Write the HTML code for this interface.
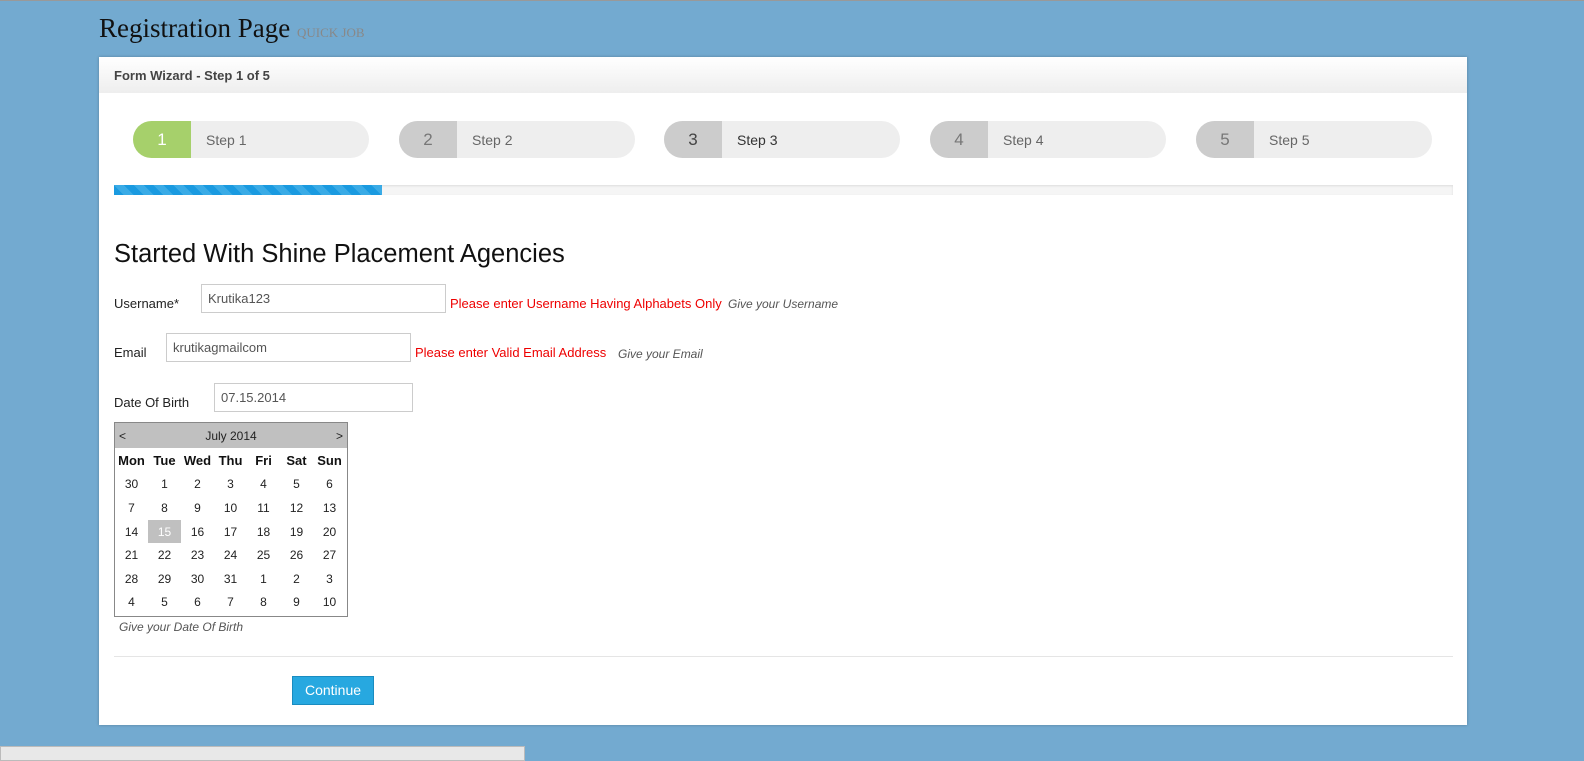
<!DOCTYPE html>
<html><head><style>
*{margin:0;padding:0;box-sizing:border-box}
body{width:1584px;height:760px;background:#73aad0;font-family:"Liberation Sans",Arial,sans-serif;position:relative;overflow:hidden;border-top:1px solid #999}
.a{position:absolute}
.pill{position:absolute;top:120px;width:236px;height:37px;border-radius:19px;background:#eee;overflow:hidden;font-size:14px;color:#666}
.pill .n{position:absolute;left:0;top:0;width:58px;height:37px;background:#ccc;color:#777;font-size:17px;text-align:center;line-height:37px}
.pill .t{position:absolute;left:73px;top:0;line-height:39px}
input{position:absolute;height:29px;border:1px solid #ccc;font:13px "Liberation Sans",Arial,sans-serif;color:#555;padding-left:6px;background:#fff}
.lab{position:absolute;font-size:13px;color:#222}
.err{position:absolute;font-size:13px;color:#e00}
.hint{position:absolute;font-size:12px;color:#555;font-style:italic}
table{border-collapse:collapse;font-size:12px}
td,th{width:33px;height:23.6px;text-align:center;color:#222}
th{font-size:13px;color:#111}
</style></head><body>
<div class="a" style="left:99px;top:12px;font:27px 'Liberation Serif',serif;color:#111">Registration Page <span style="font-size:13px;color:#888">QUICK JOB</span></div>
<div class="a" style="left:99px;top:56px;width:1368px;height:668px;background:#fff;box-shadow:0 0 3px rgba(0,0,0,.25)"></div>
<div class="a" style="left:99px;top:56px;width:1368px;height:36px;background:linear-gradient(#fff,#eee);font-size:13px;font-weight:bold;color:#444;padding:11px 0 0 15px">Form Wizard - Step 1 of 5</div>
<div class="pill" style="left:133px"><div class="n" style="background:#a6d06b;color:#fff">1</div><div class="t">Step 1</div></div>
<div class="pill" style="left:399px"><div class="n">2</div><div class="t">Step 2</div></div>
<div class="pill" style="left:664px"><div class="n" style="color:#444">3</div><div class="t" style="color:#333">Step 3</div></div>
<div class="pill" style="left:930px"><div class="n">4</div><div class="t">Step 4</div></div>
<div class="pill" style="left:1196px"><div class="n">5</div><div class="t">Step 5</div></div>
<div class="a" style="left:114px;top:184px;width:1339px;height:10px;background:#f5f5f5;box-shadow:inset 0 1px 2px rgba(0,0,0,.1)"></div>
<div class="a" style="left:114px;top:184px;width:268px;height:10px;background:repeating-linear-gradient(45deg,#1a9ae0 0 7px,#3aabe6 7px 14px)"></div>
<div class="a" style="left:114px;top:239px;font-size:25.5px;color:#111">Started With Shine Placement Agencies</div>
<div class="lab" style="left:114px;top:295px">Username*</div>
<input style="left:201px;top:283px;width:245px" value="Krutika123">
<div class="err" style="left:450px;top:295px">Please enter Username Having Alphabets Only</div>
<div class="hint" style="left:728px;top:296px">Give your Username</div>
<div class="lab" style="left:114px;top:344px">Email</div>
<input style="left:166px;top:332px;width:245px" value="krutikagmailcom">
<div class="err" style="left:415px;top:344px">Please enter Valid Email Address</div>
<div class="hint" style="left:618px;top:346px">Give your Email</div>
<div class="lab" style="left:114px;top:394px">Date Of Birth</div>
<input style="left:214px;top:382px;width:199px" value="07.15.2014">
<div class="a" style="left:114px;top:421px;width:234px;height:195px;border:1px solid #888;background:#fff">
<div style="height:25px;background:#c0c0c0;font-size:12px;color:#222;line-height:26px;text-align:center;position:relative">July 2014<span style="position:absolute;left:4px">&lt;</span><span style="position:absolute;right:4px">&gt;</span></div>
<table style="margin-top:1px">
<tr><th>Mon</th><th>Tue</th><th>Wed</th><th>Thu</th><th>Fri</th><th>Sat</th><th>Sun</th></tr>
<tr><td>30</td><td>1</td><td>2</td><td>3</td><td>4</td><td>5</td><td>6</td></tr>
<tr><td>7</td><td>8</td><td>9</td><td>10</td><td>11</td><td>12</td><td>13</td></tr>
<tr><td>14</td><td style="background:#c0c0c0;color:#fff">15</td><td>16</td><td>17</td><td>18</td><td>19</td><td>20</td></tr>
<tr><td>21</td><td>22</td><td>23</td><td>24</td><td>25</td><td>26</td><td>27</td></tr>
<tr><td>28</td><td>29</td><td>30</td><td>31</td><td>1</td><td>2</td><td>3</td></tr>
<tr><td>4</td><td>5</td><td>6</td><td>7</td><td>8</td><td>9</td><td>10</td></tr>
</table></div>
<div class="hint" style="left:119px;top:619px">Give your Date Of Birth</div>
<div class="a" style="left:114px;top:655px;width:1339px;height:1px;background:#e5e5e5"></div>
<div class="a" style="left:292px;top:675px;width:82px;height:29px;background:#27a8e0;border:1px solid #1a8cc0;color:#fff;font-size:14px;text-align:center;line-height:27px">Continue</div>
<div class="a" style="left:0;top:745px;width:525px;height:15px;background:#e8e8e8;border:1px solid #bbb"></div>
</body></html>
